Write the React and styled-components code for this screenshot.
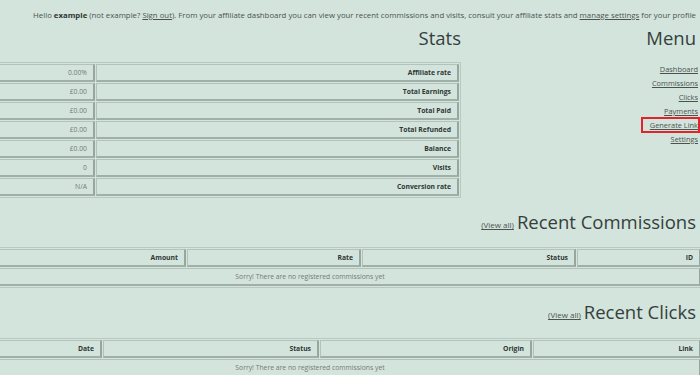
import React from "react";
import styled, { createGlobalStyle } from "styled-components";

const GlobalStyle = createGlobalStyle`
  html, body { margin: 0; padding: 0; }
  body {
    background: #d3e4dc;
    overflow: hidden;
    font-family: "Open Sans", "Noto Sans", sans-serif;
    color: #3c4542;
  }
`;

const Page = styled.div`
  width: 780px;
  margin-left: -82px;
  padding-right: 2px;
  box-sizing: border-box;
`;

const Greeting = styled.p`
  margin: 0;
  padding-top: 9px;
  font-size: 7.8px;
  line-height: 12px;
  text-align: right;
  color: #4b5350;
  white-space: nowrap;
  b { color: #2f3634; }
`;

const TextLink = styled.a`
  color: inherit;
  text-decoration: underline;
`;

const TopRow = styled.div`
  display: grid;
  grid-template-columns: 543px 1fr;
`;

const Heading = styled.h2`
  margin: ${(p) => p.$mt || 0}px 0 0;
  font-size: 18.5px;
  line-height: 24px;
  font-weight: 400;
  text-align: right;
  color: #33403c;
`;

const ViewAll = styled.a`
  font-size: 8px;
  color: #4b5350;
  text-decoration: underline;
  margin-right: 3px;
  vertical-align: 1px;
`;

const Table = styled.table`
  width: ${(p) => p.$w}px;
  margin-top: ${(p) => p.$mt || 0}px;
  border-collapse: separate;
  border-spacing: 1px;
  border: 1px solid #b9c8c1;
  table-layout: fixed;
`;

const Cell = styled.td`
  height: 15px;
  padding: 0 6px;
  font-size: 6.8px;
  line-height: 15px;
  text-align: ${(p) => p.$align || "right"};
  color: ${(p) => (p.$head ? "#2f3634" : "#737b78")};
  font-weight: ${(p) => (p.$head ? 700 : 400)};
  border: 1px solid #b4c2bc;
  border-right: 2px solid #97a69f;
  border-bottom: 2px solid #a1afa9;
  white-space: nowrap;
  overflow: hidden;
`;

const Sidebar = styled.div`
  display: flex;
  flex-direction: column;
  align-items: flex-end;
`;

const MenuList = styled.nav`
  display: flex;
  flex-direction: column;
  align-items: flex-end;
  margin-top: 12px;
  margin-right: -2px;
`;

const MenuItem = styled.a`
  font-size: 7.4px;
  line-height: 14px;
  color: #4b5350;
  text-decoration: underline;
  box-sizing: border-box;
  ${(p) =>
    p.$marked
      ? `border: 2px solid #e3232b; padding: 0 0 0 7px; margin: -1px -2px -1px 0; line-height: 12px;`
      : ""}
`;

const stats = [
  ["0.00%", "Affiliate rate"],
  ["£0.00", "Total Earnings"],
  ["£0.00", "Total Paid"],
  ["£0.00", "Total Refunded"],
  ["£0.00", "Balance"],
  ["0", "Visits"],
  ["N/A", "Conversion rate"],
];

const menu = ["Dashboard", "Commissions", "Clicks", "Payments", "Generate Link", "Settings"];

function DataTable({ cols, mt }) {
  return (
    <Table $w={778} $mt={mt}>
      <colgroup>
        {cols.map(([name, w]) => (
          <col key={name} style={{ width: w }} />
        ))}
      </colgroup>
      <tbody>
        <tr>
          {cols.map(([name]) => (
            <Cell key={name} $head>
              {name}
            </Cell>
          ))}
        </tr>
        <tr>
          <Cell colSpan={cols.length} $align="center">
            Sorry! There are no registered commissions yet
          </Cell>
        </tr>
      </tbody>
    </Table>
  );
}

export default function App() {
  return (
    <>
      <GlobalStyle />
      <Page>
        <Greeting>
          Hello <b>example</b> (not example? <TextLink href="#">Sign out</TextLink>). From your
          affiliate dashboard you can view your recent commissions and visits, consult your
          affiliate stats and <TextLink href="#">manage settings</TextLink> for your profile
        </Greeting>
        <TopRow>
          <div>
            <Heading $mt={5}>Stats</Heading>
            <Table $w={543} $mt={12}>
              <colgroup>
                <col style={{ width: 175 }} />
                <col />
              </colgroup>
              <tbody>
                {stats.map(([v, l]) => (
                  <tr key={l}>
                    <Cell>{v}</Cell>
                    <Cell $head>{l}</Cell>
                  </tr>
                ))}
              </tbody>
            </Table>
          </div>
          <Sidebar>
            <Heading $mt={5}>Menu</Heading>
            <MenuList>
              {menu.map((m) => (
                <MenuItem key={m} href="#" $marked={m === "Generate Link"}>
                  {m}
                </MenuItem>
              ))}
            </MenuList>
          </Sidebar>
        </TopRow>
        <Heading $mt={12}>
          <ViewAll href="#">(View all)</ViewAll>Recent Commissions
        </Heading>
        <DataTable
          mt={10}
          cols={[
            ["Amount", 266],
            ["Rate", 174],
            ["Status", 214],
            ["ID", 124],
          ]}
        />
        <Heading $mt={12}>
          <ViewAll href="#">(View all)</ViewAll>Recent Clicks
        </Heading>
        <DataTable
          mt={11}
          cols={[
            ["Date", 182],
            ["Status", 216],
            ["Origin", 212],
            ["Link", 168],
          ]}
        />
      </Page>
    </>
  );
}
